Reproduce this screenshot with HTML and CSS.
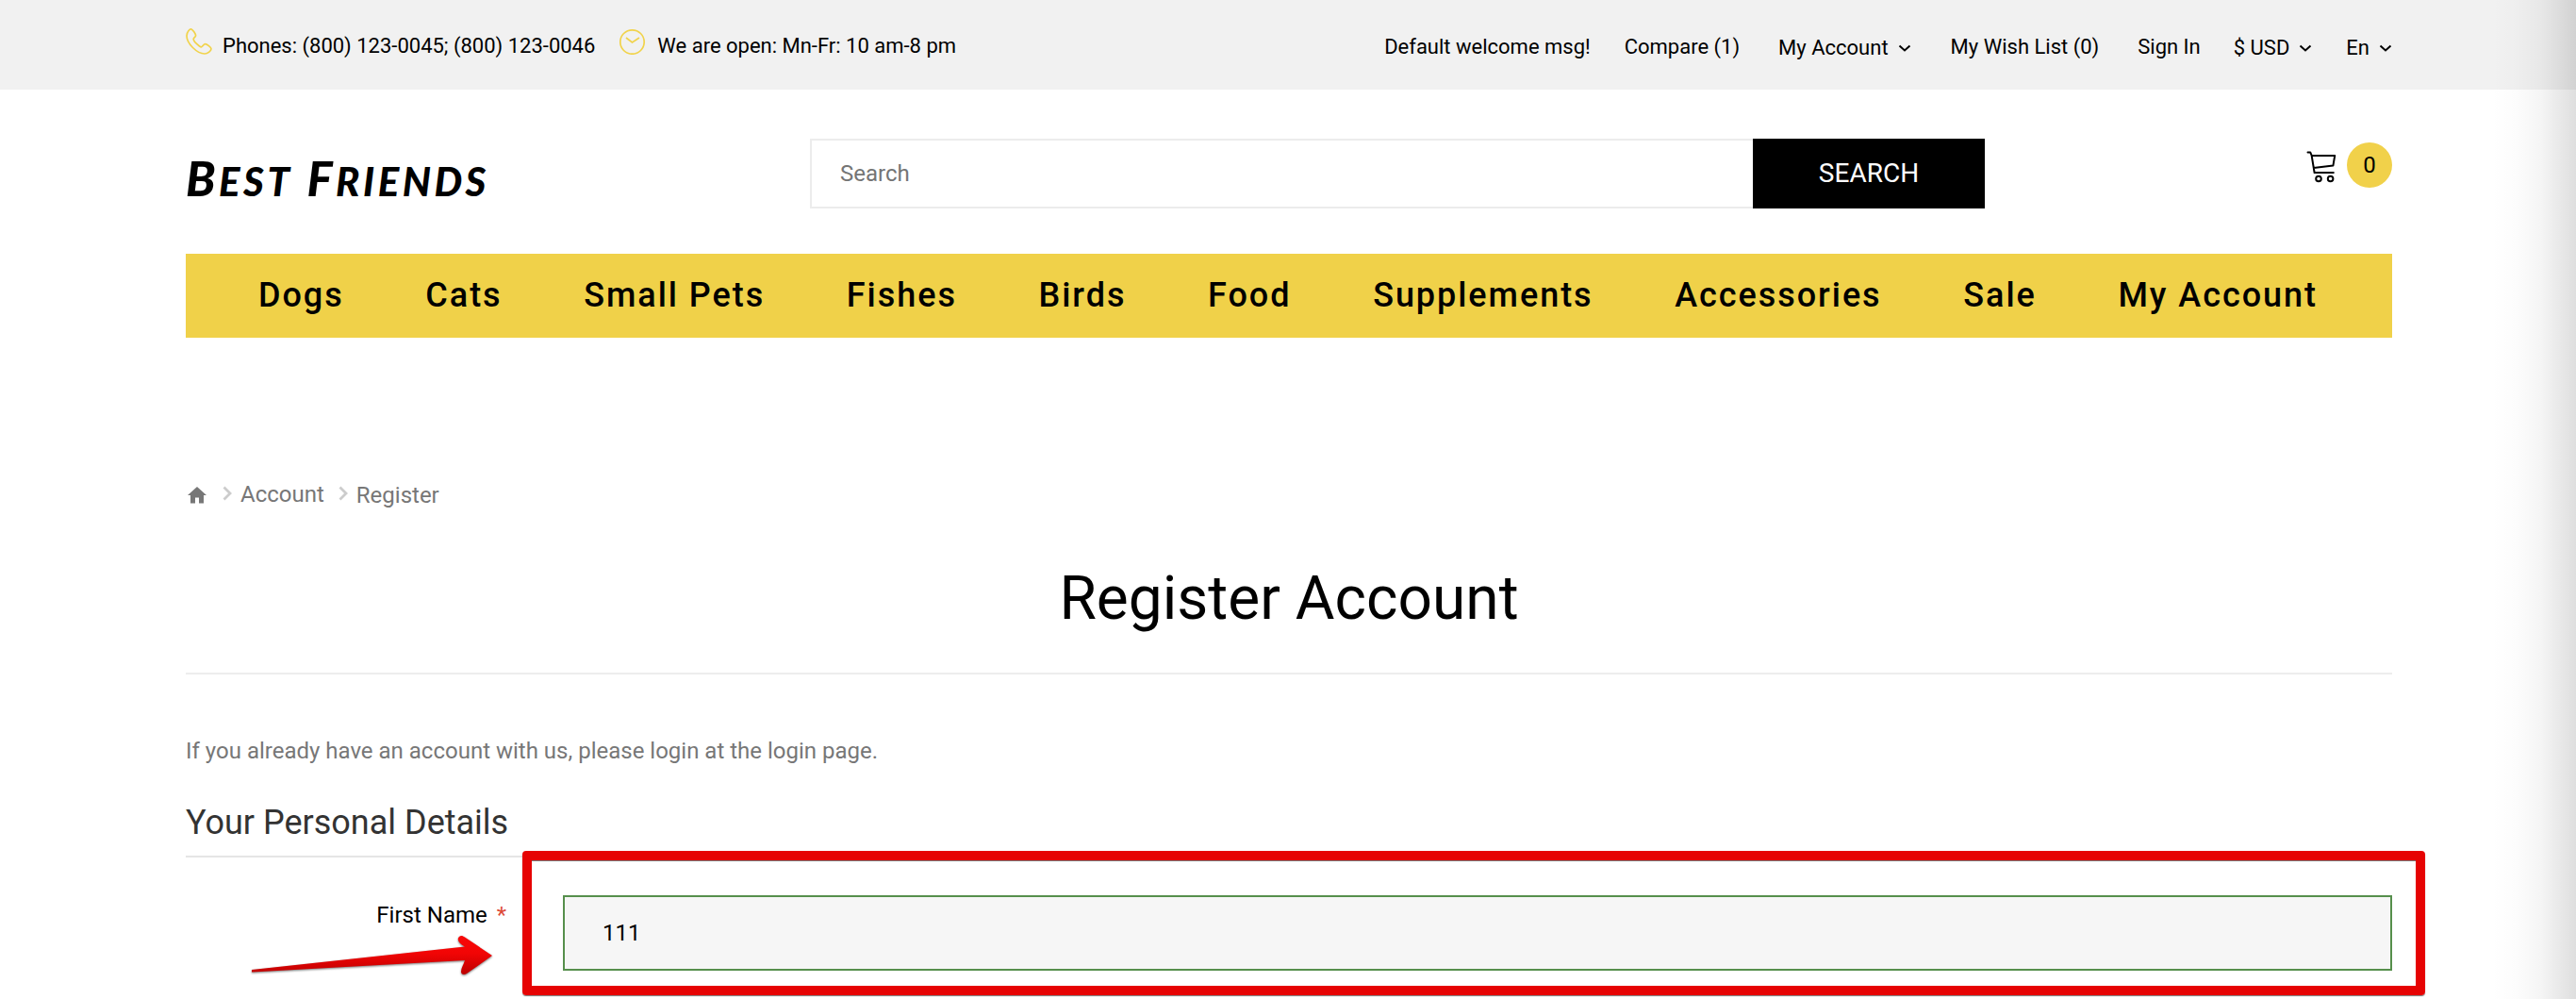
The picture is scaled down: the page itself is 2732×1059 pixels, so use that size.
FILE: index.html
```html
<!DOCTYPE html>
<html lang="en">
<head>
<meta charset="utf-8">
<title>Register Account</title>
<link rel="stylesheet" href="styles.css">
</head>
<body>
<header class="topbar">
  <div class="container topbar-row">
    <div class="contacts">
      <svg class="contact-icon" viewBox="0 0 28 28"><path d="M6 1C4.300.5 1 3.800 1 8c0 8 11 19 19 19 3.500 0 7-3.300 7-5.200 0-1.600-4.600-5.200-6.400-5.200-1.700 0-2.700 3.200-4.100 3.200-2.200 0-8.300-6.200-8.300-8.400 0-1.400 2.400-2 2.400-3.700C10.600 6 7.800 1.800 6 1z"/></svg>
      <span class="phones">Phones: (800) 123-0045; (800) 123-0046</span>
      <svg class="contact-icon" viewBox="0 0 28 28"><circle cx="13.500" cy="14.500" r="12.700"/><path d="M7 10l6.500 5 7.500-5"/></svg>
      <span class="hours">We are open: Mn-Fr: 10 am-8 pm</span>
    </div>
    <nav class="toplinks">
      <span class="welcome">Default welcome msg!</span>
      <a class="compare">Compare (1)</a>
      <a class="drop account">My Account <svg class="chev" viewBox="0 0 14 8"><path d="M1.500 1.500L7 6.500l5.500-5"/></svg></a>
      <a class="wish">My Wish List (0)</a>
      <a class="signin">Sign In</a>
      <a class="drop currency">$ USD <svg class="chev" viewBox="0 0 14 8"><path d="M1.500 1.500L7 6.500l5.500-5"/></svg></a>
      <a class="drop lang">En <svg class="chev" viewBox="0 0 14 8"><path d="M1.500 1.500L7 6.500l5.500-5"/></svg></a>
    </nav>
  </div>
</header>
<div class="container masthead">
  <a class="logo"><span class="logo-word"><span class="cap">B</span>EST</span><span class="logo-word"><span class="cap">F</span>RIENDS</span></a>
  <form class="search"><input class="search-field" type="text" placeholder="Search"><button class="search-btn" type="button">SEARCH</button></form>
  <a class="cart">
    <svg class="cart-icon" viewBox="0 0 32 34"><path d="M1.500 1.600h2.800l1.300 3L8.600 23h20.200M6 5h24.200l-1.800 10.600L7.700 18"/><circle cx="13" cy="29.500" r="2.800"/><circle cx="25.600" cy="29.500" r="2.800"/></svg>
    <span class="count">0</span>
  </a>
</div>
<nav class="container mainnav">
  <a>Dogs</a><a>Cats</a><a>Small Pets</a><a>Fishes</a><a>Birds</a><a>Food</a><a>Supplements</a><a>Accessories</a><a>Sale</a><a>My Account</a>
</nav>
<main class="container">
  <div class="crumbs">
    <svg class="home" viewBox="0 0 20 18"><path d="M10 0L0 9h3v8.500h5v-6h4v6h5V9h3z"/></svg>
    <svg class="sep" viewBox="0 0 10 16"><path d="M1.500 1.500L8 8l-6.500 6.500"/></svg>
    <a>Account</a>
    <svg class="sep second" viewBox="0 0 10 16"><path d="M1.500 1.500L8 8l-6.500 6.500"/></svg>
    <span class="current">Register</span>
  </div>
  <h1>Register Account</h1>
  <p class="intro">If you already have an account with us, please login at the login page.</p>
  <h2>Your Personal Details</h2>
  <div class="field">
    <label for="firstname">First Name <span class="req">*</span></label>
    <input id="firstname" type="text" value="111">
  </div>
</main>
<div class="highlight"></div>
<svg class="arrow" viewBox="0 0 270 50">
  <defs><linearGradient id="red" x1="0" y1="0" x2="0" y2="1"><stop offset="0" stop-color="#f80808"/><stop offset=".45" stop-color="#f20505"/><stop offset="1" stop-color="#bd0000"/></linearGradient></defs>
  <path d="M8 39L234 14.500c-5-3-8-6-7-9 1-3 4-3.500 7-1l29 19.500-27 19c-3 2-6 1-6-2 0-4 3-8 4-12L8 41.500z" fill="url(#red)"/>
</svg>
<div class="edge"></div>
</body>
</html>
```

FILE: styles.css
```css
* { box-sizing: border-box; }
body {
  margin: 0;
  position: relative;
  height: 1059px;
  overflow: hidden;
  background: #fff;
  color: #000;
  font-family: Roboto, "Liberation Sans", sans-serif;
  font-size: 24px;
}
.container { width: 2340px; margin-left: 197px; }
.topbar { height: 95px; background: #f1f1f1; font-size: 22px; line-height: 26px; }
.topbar-row { display: flex; justify-content: space-between; }
.contacts { display: flex; padding-top: 36px; }
.contact-icon { width: 28px; height: 28px; margin-top: -6px; fill: none; stroke: #f1d34b; stroke-width: 1.7; }
.phones { margin: 0 26px 0 11px; }
.hours { margin-left: 12px; }
.toplinks { display: flex; padding-top: 37px; }
.toplinks .drop { display: flex; padding-top: 1px; }
.chev { width: 14px; height: 8px; margin: 9px 0 0 10px; fill: none; stroke: #000; stroke-width: 2; }
.compare { margin-left: 36px; }
.account { margin-left: 41px; }
.wish { margin-left: 42px; }
.signin { margin-left: 41px; }
.currency { margin-left: 35px; }
.lang { margin-left: 36px; }
.masthead { height: 174px; display: flex; align-items: flex-start; padding-top: 52px; }
.logo { width: 662px; padding: 12px 0 0; display: flex; gap: 15px; font: italic 900 42px/60px Lato, sans-serif; letter-spacing: 3.5px; }
.cap { font-size: 51px; }
.search { display: flex; width: 1246px; height: 74px; }
.search-field { flex: 1; min-width: 0; border: 2px solid #ececec; border-right: 0; padding: 0 30px; font: 24px Roboto, sans-serif; outline: 0; background: #fff; }
.search-field::placeholder { color: #757575; }
.search-btn { width: 246px; border: 0; background: #000; color: #fff; font: 28px Roboto, sans-serif; padding: 0 0 2px; }
.cart { margin-left: auto; display: flex; padding-top: 4px; }
.cart-icon { width: 32px; height: 34px; margin: 9px 11px 0 0; fill: none; stroke: #000; stroke-width: 2; stroke-linejoin: round; stroke-linecap: round; }
.count { width: 48px; height: 48px; border-radius: 50%; background: #f1d14a; text-align: center; line-height: 48px; }
.mainnav { height: 89px; background: #f0d149; display: flex; justify-content: space-between; padding: 0 79px 0 77px; font-size: 36px; font-weight: 500; letter-spacing: 1.950px; line-height: 88px; white-space: nowrap; }
.crumbs { display: flex; margin-top: 152px; height: 28px; line-height: 28px; color: #777; }
.home { width: 20px; height: 18px; margin: 6px 0 0 2px; fill: #777; }
.sep { width: 10px; height: 16px; margin: 5px 9px 0 17px; fill: none; stroke: #ccc; stroke-width: 2.800; }
.sep.second { margin-left: 15px; }
.current { padding-top: 1px; }
h1 { margin: 57px 0 0; height: 120px; border-bottom: 2px solid #ededed; text-align: center; font-size: 64px; font-weight: 400; line-height: 80px; }
.intro { margin: 66px 0 0; line-height: 30px; color: #777; }
h2 { margin: 36px 0 0; height: 62px; border-bottom: 2px solid #e5e5e5; color: #333; font-size: 36px; font-weight: 400; line-height: 50px; }
.field { display: flex; margin-top: 40px; }
.field label { width: 340px; margin-right: 60px; padding-top: 7px; line-height: 28px; text-align: right; }
.req { color: #dd4b39; margin-left: 4px; }
.field input { flex: 1; height: 80px; border: 2px solid #568f4c; background: #f6f6f6; padding: 0 40px; font: 24px Roboto, sans-serif; outline: 0; }
.highlight { position: absolute; left: 554px; top: 902px; width: 2018px; height: 153px; border: 10px solid #e60303; border-radius: 4px; box-shadow: 0 1px 1px #777, inset 0 1px 0 #777; }
.arrow { position: absolute; left: 259px; top: 989px; width: 270px; height: 50px; filter: drop-shadow(0 1px 1px #777); }
.edge { position: absolute; top: 0; right: 0; width: 90px; height: 100%; background: linear-gradient(90deg, transparent, rgba(0,0,0,.012) 30%, rgba(0,0,0,.04) 58%, rgba(0,0,0,.13)); }
```
